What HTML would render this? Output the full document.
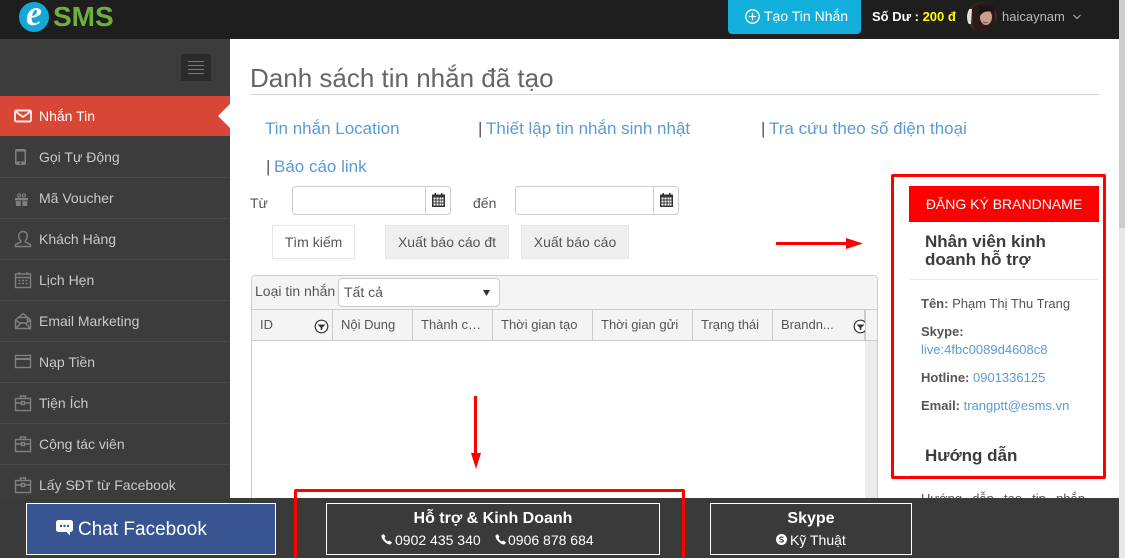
<!DOCTYPE html>
<html lang="vi"><head><meta charset="utf-8"><title>eSMS</title>
<style>
html,body{margin:0;padding:0;width:1125px;height:558px;overflow:hidden;background:#fff}
body{position:relative;font-family:"Liberation Sans","Noto Sans CJK SC",sans-serif;font-size:14px;color:#555}
.a{position:absolute;white-space:nowrap}
.box{position:absolute;box-sizing:border-box}
.menu{position:absolute;left:0;width:230px;height:41px;box-sizing:border-box;border-bottom:1px solid #4a4a4a;color:#c9c9c9;font-size:14px;line-height:40px;padding-left:39px}
.menu svg{position:absolute;left:14px;top:11px;fill:none;stroke:#808080;stroke-width:1.4}
.lnk{color:#5b9bd5;font-size:17px}
.bar{color:#555;font-size:17px}
.th{position:absolute;top:310px;height:31px;box-sizing:border-box;border-right:1px solid #ccc;border-bottom:1px solid #ccc;line-height:30px;padding-left:8px;font-size:13px;color:#555;background:#f4f4f4;white-space:nowrap;overflow:hidden}
.btn{position:absolute;top:225px;height:34px;box-sizing:border-box;border:1px solid #e6e6e6;line-height:32px;text-align:center;font-size:14px;color:#555;background:#efefef}
.inp{position:absolute;top:186px;height:29px;box-sizing:border-box;border:1px solid #ccc;border-radius:4px;background:#fff}
.inp i{position:absolute;right:0;top:0;width:24px;height:27px;border-left:1px solid #ccc}
.inp svg{position:absolute;left:6px;top:6px}
.r{position:absolute;background:#f00}
</style></head><body>

<!-- top bar -->
<div class="box" style="left:0;top:0;width:1119px;height:39px;background:#1e1e1e"></div>
<svg class="a" style="left:18px;top:1px" width="32" height="32" viewBox="0 0 32 32"><circle cx="16" cy="16" r="15" fill="#15a8d6"/><text x="16" y="24" text-anchor="middle" font-family="Liberation Serif" font-style="italic" font-weight="bold" font-size="36" fill="#fff">e</text></svg>
<div class="a" style="left:53px;top:0;font-size:28px;line-height:33px;font-weight:bold;color:#6fb03a">SMS</div>

<div class="box" style="left:728px;top:0;width:133px;height:34px;background:#13afdc;border-radius:0 0 4px 4px"></div>
<svg class="a" style="left:745px;top:9px" width="15" height="15" viewBox="0 0 15 15" fill="none" stroke="#fff" stroke-width="1.3"><circle cx="7.5" cy="7.5" r="6.7"/><path d="M7.5 3.8v7.4M3.8 7.5h7.4"/></svg>
<div class="a" style="left:764px;top:8px;font-size:14px;line-height:17px;color:#fff">Tạo Tin Nhắn</div>
<div class="a" style="left:872px;top:8px;font-size:13px;line-height:17px;font-weight:bold;color:#fff">Số Dư : <span style="color:#ff0">200 đ</span></div>
<svg class="a" style="left:967px;top:2px" width="30" height="30" viewBox="0 0 30 30"><defs><clipPath id="c"><circle cx="15" cy="15" r="15"/></clipPath></defs><g clip-path="url(#c)"><rect width="30" height="30" fill="#3b2a28"/><path d="M0 7v15h4l1-15z" fill="#e2e2e2"/><path d="M5 5C10-1 24-1 27 6L29 26 22 30H10L6 24z" fill="#2a1a18"/><ellipse cx="19" cy="15" rx="6" ry="8" fill="#c9a090"/><path d="M11 4h16v7C22 8 16 9 13 14z" fill="#1d1313"/><path d="M16 20q3 1.500 5 0" stroke="#8a4a4a" stroke-width="1" fill="none"/></g></svg>
<div class="a" style="left:1002px;top:8px;font-size:13px;line-height:17px;color:#b8b8b8">haicaynam</div>
<svg class="a" style="left:1072px;top:13px" width="10" height="8" viewBox="0 0 10 8" fill="none" stroke="#aaa" stroke-width="1.2"><path d="M1.500 2l3.500 3.500 3.500-3.500"/></svg>

<!-- scrollbar -->
<div class="box" style="left:1119px;top:0;width:6px;height:558px;background:#e8e8e8"></div>
<div class="box" style="left:1119px;top:0;width:6px;height:228px;background:#cdcdcd"></div>

<!-- sidebar -->
<div class="box" style="left:0;top:39px;width:230px;height:459px;background:#3c3c3c"></div>
<div class="box" style="left:181px;top:54px;width:30px;height:27px;background:#2b2b2b"></div>
<div class="box" style="left:188px;top:61px;width:16px;height:1px;background:#777"></div>
<div class="box" style="left:188px;top:65px;width:16px;height:1px;background:#777"></div>
<div class="box" style="left:188px;top:69px;width:16px;height:1px;background:#777"></div>
<div class="box" style="left:188px;top:73px;width:16px;height:1px;background:#777"></div>

<div class="box" style="left:0;top:96px;width:230px;height:40px;background:#d84636"></div>
<svg class="a" style="left:218px;top:104px" width="12" height="24" viewBox="0 0 12 24"><path d="M12 0v24L0 12z" fill="#fff"/></svg>
<svg class="a" style="left:14px;top:109px" width="18" height="14" viewBox="0 0 18 14" fill="none" stroke="#fbe9e7" stroke-width="1.900"><rect x="1" y="1.500" width="16" height="11" rx="1.500"/><path d="M1.500 2.500l7.500 5.500 7.500-5.500"/></svg>
<div class="a" style="left:39px;top:108px;font-size:14px;line-height:17px;color:#fff">Nhắn Tin</div>

<div class="menu" style="top:137px"><svg width="20" height="18" viewBox="0 0 20 18" style="top:11px;left:11px"><rect x="4" y="1" width="11" height="16" rx="2" fill="#808080" stroke="none"/><rect x="5.500" y="3.500" width="8" height="10" fill="#3c3c3c" stroke="none"/><rect x="8.500" y="14.500" width="2" height="1.500" fill="#3c3c3c" stroke="none"/></svg>Gọi Tự Động</div>
<div class="menu" style="top:178px"><svg width="15" height="13" viewBox="0 0 18 16" style="top:15px"><path d="M1 6h16v3H1zM2 10h6v6H2zM10 10h6v6h-6z" fill="#808080" stroke="none"/><circle cx="6" cy="3" r="1.800"/><circle cx="12" cy="3" r="1.800"/></svg>Mã Voucher</div>
<div class="menu" style="top:219px"><svg width="18" height="18" viewBox="0 0 18 18"><path d="M9 1.500c-2.700 0-4.300 2-4.300 4.500 0 2.200 1 3.700 2 4.600v1.400L1.500 14.500v2h15v-2L11.300 12v-1.400c1-.9 2-2.400 2-4.600 0-2.500-1.600-4.500-4.300-4.500z"/></svg>Khách Hàng</div>
<div class="menu" style="top:260px"><svg width="18" height="18" viewBox="0 0 18 18"><rect x="1.500" y="3" width="15" height="13.500"/><path d="M5 1v3M13 1v3M1.500 6.500h15M4.500 9.500h2M8 9.500h2M11.500 9.500h2M4.500 12.500h2M8 12.500h2M11.500 12.500h2"/></svg>Lịch Hẹn</div>
<div class="menu" style="top:301px"><svg width="18" height="18" viewBox="0 0 18 18"><path d="M1.500 8L9 1.500 16.500 8v8.500h-15zM1.500 16.500L7 11h4l5.500 5.500M1.500 8L7 12M16.500 8L11 12M4.500 5.500h9v4"/></svg>Email Marketing</div>
<div class="menu" style="top:342px"><svg width="18" height="16" viewBox="0 0 18 16" style="top:12px"><rect x="1.500" y="1.500" width="15" height="12"/><path d="M1.500 5h15" stroke-width="2"/></svg>Nạp Tiền</div>
<div class="menu" style="top:383px"><svg width="18" height="18" viewBox="0 0 18 18"><rect x="1.500" y="4.500" width="15" height="12"/><path d="M6.500 4.500V2h5v2.500M1.500 9h6M10.500 9h6"/><rect x="7.500" y="7.500" width="3" height="3"/></svg>Tiện Ích</div>
<div class="menu" style="top:424px"><svg width="18" height="18" viewBox="0 0 18 18"><rect x="1.500" y="4.500" width="15" height="12"/><path d="M6.500 4.500V2h5v2.500M1.500 9h6M10.500 9h6"/><rect x="7.500" y="7.500" width="3" height="3"/></svg>Cộng tác viên</div>
<div class="menu" style="top:465px;border:0"><svg width="18" height="18" viewBox="0 0 18 18"><rect x="1.500" y="4.500" width="15" height="12"/><path d="M6.500 4.500V2h5v2.500M1.500 9h6M10.500 9h6"/><rect x="7.500" y="7.500" width="3" height="3"/></svg>Lấy SĐT từ Facebook</div>

<!-- main heading -->
<div class="a" style="left:250px;top:62px;font-size:26px;line-height:32px;color:#666">Danh sách tin nhắn đã tạo</div>
<div class="box" style="left:250px;top:94px;width:849px;height:1px;background:#d5d5d5"></div>

<div class="a lnk" style="left:265px;top:119px;line-height:20px">Tin nhắn Location</div>
<div class="a bar" style="left:478px;top:119px;line-height:20px">|</div>
<div class="a lnk" style="left:486px;top:119px;line-height:20px">Thiết lập tin nhắn sinh nhật</div>
<div class="a bar" style="left:761px;top:119px;line-height:20px">|</div>
<div class="a lnk" style="left:769px;top:119px;line-height:20px">Tra cứu theo số điện thoại</div>
<div class="a bar" style="left:266px;top:157px;line-height:20px">|</div>
<div class="a lnk" style="left:274px;top:157px;line-height:20px">Báo cáo link</div>

<!-- filter -->
<div class="a" style="left:250px;top:195px;line-height:17px">Từ</div>
<div class="inp" style="left:292px;width:159px"><i><svg width="13" height="14" viewBox="0 0 13 14"><path d="M0 1.500h13V14H0z" fill="#333"/><path d="M2.500 0h1.500v2H2.500zM9 0h1.500v2H9z" fill="#333"/><path d="M1.500 4.500h2v2h-2zM4.500 4.500h2v2h-2zM7.500 4.500h2v2h-2zM10 4.500h1.500v2H10zM1.500 7.500h2v2h-2zM4.500 7.500h2v2h-2zM7.500 7.500h2v2h-2zM10 7.500h1.500v2H10zM1.500 10.500h2v2h-2zM4.500 10.500h2v2h-2zM7.500 10.500h2v2h-2zM10 10.500h1.500v2H10z" fill="#fff"/></svg></i></div>
<div class="a" style="left:473px;top:195px;line-height:17px">đến</div>
<div class="inp" style="left:515px;width:164px"><i><svg width="13" height="14" viewBox="0 0 13 14"><path d="M0 1.500h13V14H0z" fill="#333"/><path d="M2.500 0h1.500v2H2.500zM9 0h1.500v2H9z" fill="#333"/><path d="M1.500 4.500h2v2h-2zM4.500 4.500h2v2h-2zM7.500 4.500h2v2h-2zM10 4.500h1.500v2H10zM1.500 7.500h2v2h-2zM4.500 7.500h2v2h-2zM7.500 7.500h2v2h-2zM10 7.500h1.500v2H10zM1.500 10.500h2v2h-2zM4.500 10.500h2v2h-2zM7.500 10.500h2v2h-2zM10 10.500h1.500v2H10z" fill="#fff"/></svg></i></div>

<div class="btn" style="left:272px;width:83px;background:#fff">Tìm kiếm</div>
<div class="btn" style="left:385px;width:124px">Xuất báo cáo đt</div>
<div class="btn" style="left:521px;width:108px">Xuất báo cáo</div>

<!-- table -->
<div class="box" style="left:251px;top:275px;width:627px;height:240px;border:1px solid #ccc;border-radius:4px 4px 0 0;background:#fff"></div>
<div class="box" style="left:252px;top:276px;width:625px;height:34px;background:#f4f4f4;border-radius:4px 4px 0 0;border-bottom:1px solid #ccc"></div>
<div class="a" style="left:255px;top:283px;line-height:17px">Loại tin nhắn</div>
<div class="box" style="left:338px;top:278px;width:162px;height:29px;border:1px solid #ccc;border-radius:4px;background:#fff"></div>
<div class="a" style="left:344px;top:284px;line-height:17px">Tất cả</div>
<svg class="a" style="left:483px;top:290px" width="7" height="6" viewBox="0 0 7 6"><path d="M0 0h7L3.500 6z" fill="#333"/></svg>

<div class="th" style="left:252px;width:81px">ID</div>
<div class="th" style="left:333px;width:80px">Nội Dung</div>
<div class="th" style="left:413px;width:80px">Thành c…</div>
<div class="th" style="left:493px;width:100px">Thời gian tạo</div>
<div class="th" style="left:593px;width:100px">Thời gian gửi</div>
<div class="th" style="left:693px;width:80px">Trạng thái</div>
<div class="th" style="left:773px;width:92px">Brandn...</div>
<svg class="a" style="left:314px;top:319px" width="15" height="15" viewBox="0 0 15 15"><circle cx="7.500" cy="7.500" r="6.300" fill="#fff" stroke="#333" stroke-width="1.200"/><path d="M3.500 5.500h8L8.300 8.800v2.200H6.700V8.800z" fill="#333"/></svg>
<svg class="a" style="left:853px;top:319px" width="15" height="15" viewBox="0 0 15 15"><circle cx="7.500" cy="7.500" r="6.300" fill="#fff" stroke="#333" stroke-width="1.200"/><path d="M3.500 5.500h8L8.300 8.800v2.200H6.700V8.800z" fill="#333"/></svg>
<div class="th" style="left:865px;width:12px;border-right:0;border-left:1px solid #ccc"></div>
<div class="box" style="left:865px;top:341px;width:12px;height:160px;background:#ececec"></div>

<!-- right panel -->
<div class="box" style="left:909px;top:186px;width:190px;height:36px;background:#f00;color:#fff;text-align:center;font-size:14px;line-height:36px">ĐĂNG KÝ BRANDNAME</div>
<div class="a" style="left:925px;top:233px;font-size:17px;line-height:18px;font-weight:bold;color:#3c3c3c">Nhân viên kinh<br>doanh hỗ trợ</div>
<div class="box" style="left:910px;top:279px;width:188px;height:1px;background:#e3eaf0"></div>
<div class="a" style="left:921px;top:295px;font-size:13px;line-height:17px;color:#555"><b>Tên:</b> Phạm Thị Thu Trang</div>
<div class="a" style="left:921px;top:323px;font-size:13px;line-height:17px;color:#555"><b>Skype:</b></div>
<div class="a" style="left:921px;top:341px;font-size:13px;line-height:17px;color:#5b9bd5">live:4fbc0089d4608c8</div>
<div class="a" style="left:921px;top:369px;font-size:13px;line-height:17px;color:#555"><b>Hotline:</b> <span style="color:#5b9bd5">0901336125</span></div>
<div class="a" style="left:921px;top:397px;font-size:13px;line-height:17px;color:#555"><b>Email:</b> <span style="color:#5b9bd5">trangptt@esms.vn</span></div>
<div class="a" style="left:925px;top:447px;font-size:17px;line-height:18px;font-weight:bold;color:#3c3c3c">Hướng dẫn</div>
<div class="box" style="left:910px;top:475px;width:188px;height:1px;background:#e3eaf0"></div>
<div class="a" style="left:921px;top:490px;font-size:13px;line-height:17px;color:#555;word-spacing:6.500px">Hướng dẫn tạo tin nhắn</div>

<!-- arrows -->
<div class="r" style="left:776px;top:242px;width:70px;height:3px"></div>
<svg class="a" style="left:846px;top:238px" width="17" height="11" viewBox="0 0 17 11"><path d="M0 0l17 5.500L0 11z" fill="#f00"/></svg>
<div class="r" style="left:474px;top:396px;width:3px;height:58px"></div>
<svg class="a" style="left:471px;top:453px" width="10" height="16" viewBox="0 0 10 16"><path d="M0 0h10L5 16z" fill="#f00"/></svg>

<!-- red outline right -->
<div class="box" style="left:891px;top:174px;width:215px;height:305px;border:3px solid #f00;border-radius:2px"></div>

<!-- bottom bar -->
<div class="box" style="left:0;top:498px;width:1119px;height:60px;background:#3a3a3a"></div>
<div class="box" style="left:26px;top:503px;width:250px;height:52px;background:#385591;border:1px solid #fff"></div>
<svg class="a" style="left:56px;top:520px" width="17" height="16" viewBox="0 0 17 16"><path d="M2.500 0h12A2.500 2.500 0 0 1 17 2.500v7a2.500 2.500 0 0 1-2.500 2.500H14v3.500L10.500 12h-8A2.500 2.500 0 0 1 0 9.500v-7A2.500 2.500 0 0 1 2.500 0z" fill="#fff"/><circle cx="5" cy="6" r="1.200" fill="#385591"/><circle cx="8.500" cy="6" r="1.200" fill="#385591"/><circle cx="12" cy="6" r="1.200" fill="#385591"/></svg>
<div class="a" style="left:78px;top:519px;font-size:19px;line-height:22px;color:#fff">Chat Facebook</div>

<div class="box" style="left:326px;top:503px;width:334px;height:52px;border:1px solid #fff"></div>
<div class="a" style="left:326px;top:509px;width:334px;text-align:center;font-size:16px;line-height:19px;font-weight:bold;color:#fff">Hỗ trợ &amp; Kinh Doanh</div>
<svg class="a" style="left:381px;top:534px" width="11" height="11" viewBox="0 0 11 11"><path d="M2.500 0L0.500 1.500C0 5 6 11 9.500 10.500L11 8.500 8.500 6.500 7 7.500C5.500 7 4 5.500 3.500 4L4.500 2.500z" fill="#fff"/></svg>
<div class="a" style="left:395px;top:532px;font-size:14px;line-height:16px;color:#fff">0902 435 340</div>
<svg class="a" style="left:495px;top:534px" width="11" height="11" viewBox="0 0 11 11"><path d="M2.500 0L0.500 1.500C0 5 6 11 9.500 10.500L11 8.500 8.500 6.500 7 7.500C5.500 7 4 5.500 3.500 4L4.500 2.500z" fill="#fff"/></svg>
<div class="a" style="left:508px;top:532px;font-size:14px;line-height:16px;color:#fff">0906 878 684</div>

<div class="box" style="left:710px;top:503px;width:202px;height:52px;border:1px solid #fff"></div>
<div class="a" style="left:710px;top:509px;width:202px;text-align:center;font-size:16px;line-height:19px;font-weight:bold;color:#fff">Skype</div>
<svg class="a" style="left:776px;top:534px" width="11" height="11" viewBox="0 0 11 11"><circle cx="5.500" cy="5.500" r="5.500" fill="#fff"/><path d="M7.500 3.500C6.500 2.800 3.800 2.800 3.700 4.300 3.600 6 7.500 5 7.400 6.800 7.300 8.200 4.500 8.300 3.400 7.400" fill="none" stroke="#3a3a3a" stroke-width="1.100"/></svg>
<div class="a" style="left:790px;top:532px;font-size:14px;line-height:16px;color:#fff">Kỹ Thuật</div>

<!-- red outline bottom -->
<div class="box" style="left:294px;top:489px;width:391px;height:75px;border:3px solid #f00;border-radius:2px"></div>

</body></html>
